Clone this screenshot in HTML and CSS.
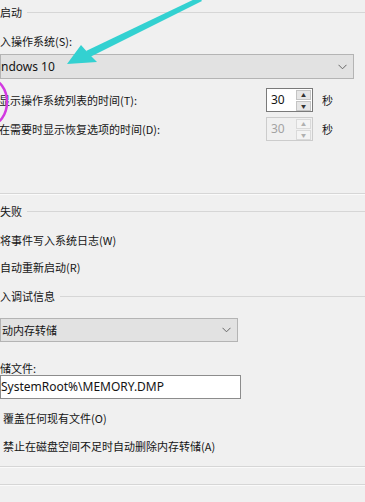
FILE: index.html
```html
<!DOCTYPE html>
<html lang="zh-CN">
<head>
  <meta charset="UTF-8">
  <meta name="viewport" content="width=device-width, initial-scale=1.0">
  <title>启动和故障恢复</title>
  <link rel="stylesheet" href="styles.css">
</head>
<body>

  <div class="panel">
    <!-- 系统启动 -->
    <div class="legend legend-first"><span>启动</span><div class="rule"></div></div>
    <div class="label label-os">入操作系统(S):</div>
    <div class="select select-os">
      <span class="select-text">ndows 10</span>
      <svg class="chevron" width="9" height="6" viewBox="0 0 9 6"><polyline points="0.5,0.8 4.5,4.8 8.5,0.8" fill="none" stroke="#666" stroke-width="1"/></svg>
    </div>

    <div class="time-row row-first">
      <span class="label cut">显示操作系统列表的时间(T):</span>
      <div class="spin">
        <span class="spin-value">30</span>
        <div class="spin-buttons">
          <span class="spin-btn">&#9650;</span>
          <span class="spin-btn">&#9660;</span>
        </div>
      </div>
      <span class="unit">秒</span>
    </div>
    <div class="time-row row-second">
      <span class="label cut">在需要时显示恢复选项的时间(D):</span>
      <div class="spin disabled">
        <span class="spin-value">30</span>
        <div class="spin-buttons">
          <span class="spin-btn">&#9650;</span>
          <span class="spin-btn">&#9660;</span>
        </div>
      </div>
      <span class="unit">秒</span>
    </div>
    <div class="group-end group-end-first"></div>

    <!-- 系统失败 -->
    <div class="legend legend-fail"><span>失败</span><div class="rule"></div></div>
    <div class="label check check-log">将事件写入系统日志(W)</div>
    <div class="label check check-restart">自动重新启动(R)</div>

    <div class="legend legend-debug"><span>入调试信息</span><div class="rule"></div></div>
    <div class="select select-dump">
      <span class="select-text cjk">动内存转储</span>
      <svg class="chevron" width="9" height="6" viewBox="0 0 9 6"><polyline points="0.5,0.8 4.5,4.8 8.5,0.8" fill="none" stroke="#666" stroke-width="1"/></svg>
    </div>
    <div class="label label-file">储文件:</div>
    <div class="textbox">SystemRoot%\MEMORY.DMP</div>
    <div class="label check check-overwrite">覆盖任何现有文件(O)</div>
    <div class="label check check-keep">禁止在磁盘空间不足时自动删除内存转储(A)</div>
    <div class="group-end group-end-second"></div>
    <div class="group-end group-end-third"></div>

    <!-- 标注 -->
    <svg class="marks" width="365" height="502" viewBox="0 0 365 502">
      <polygon points="199,-3 202,1 90,57 86,51" fill="#33d1d1"/>
      <polygon points="67,64 81,45 89,54 97,62" fill="#33d1d1"/>
      <ellipse cx="-10" cy="102" rx="17" ry="23" fill="none" stroke="#d23ae0" stroke-width="2.5"/>
    </svg>
  </div>

</body>
</html>
```

FILE: styles.css
```css
/* Geral */
body {
  margin: 0;
  background: #f0f0f0;
  font-family: "Noto Sans CJK SC", "Noto Sans", sans-serif;
  font-size: 11px;
  color: #141414;
}
.panel {
  position: relative;
  width: 365px;
  height: 502px;
  overflow: hidden;
  display: flex;
  flex-direction: column;
}
.label {
  height: 16px;
  line-height: 16px;
  white-space: nowrap;
}
.cut {
  margin-left: -1px;
}
/* Títulos de grupo */
.legend {
  display: flex;
  align-items: center;
  height: 16px;
  line-height: 16px;
}
.legend .rule {
  flex: 1;
  height: 1px;
  background: #d6d6d6;
  margin-left: 5px;
}
.legend-first { margin-top: 4px; }
.legend-fail { margin-top: 8px; }
.legend-debug { margin-top: 13px; }
.group-end {
  height: 1px;
  background: #d6d6d6;
  border-bottom: 1px solid #fafafa;
}
.group-end-first { margin-top: 52px; }
.group-end-second { margin-top: 12px; }
.group-end-third { margin-top: 16px; }
/* Caixas de seleção */
.select {
  display: flex;
  align-items: center;
  justify-content: space-between;
  box-sizing: border-box;
  background: #e2e2e2;
  border: 1px solid #b4b4b4;
  padding: 0 6px 0 0;
  font-family: "Noto Sans", "Noto Sans CJK SC", sans-serif;
  font-size: 12px;
}
.select .cjk {
  font-family: "Noto Sans CJK SC", sans-serif;
  font-size: 11px;
  margin-left: 1px;
}
.select-os {
  margin-top: 5px;
  width: 354px;
  height: 25px;
}
.select-dump {
  margin-top: 14px;
  width: 238px;
  height: 24px;
}
.label-os { margin-top: 13px; }
.label-file {
  margin-top: 19px;
  height: 14px;
  line-height: 14px;
}
/* Linhas de tempo */
.time-row {
  display: grid;
  grid-template-columns: 257px 47px auto;
  column-gap: 9px;
  align-items: center;
  height: 24px;
}
.row-first { margin-top: 9px; }
.row-second { margin-top: 5px; }
.spin {
  display: flex;
  box-sizing: border-box;
  height: 24px;
  border: 1px solid #7a7a7a;
  background: #fff;
}
.spin-value {
  flex: 1;
  padding-left: 4px;
  line-height: 21px;
  font-family: "Noto Sans", sans-serif;
  font-size: 12px;
}
.spin-buttons {
  width: 15px;
  display: flex;
  flex-direction: column;
  gap: 1px;
  padding: 1px 1px 1px 0;
  background: #fff;
}
.spin-btn {
  flex: 1;
  background: #e6e6e6;
  border: 1px solid #c4c4c4;
  font-size: 5px;
  line-height: 8px;
  text-align: center;
  color: #333;
}
.spin.disabled {
  border-color: #cccccc;
  background: #f0f0f0;
}
.spin.disabled .spin-value { color: #a3a3a3; }
.spin.disabled .spin-buttons { background: #f0f0f0; }
.spin.disabled .spin-btn {
  background: #f4f4f4;
  border-color: #dadada;
  color: #b0b0b0;
}
.unit { font-size: 11px; }
/* Opções */
.check-log { margin-top: 13px; }
.check-restart { margin-top: 11px; }
.check-overwrite { margin-top: 11px; padding-left: 3px; }
.check-keep { margin-top: 12px; padding-left: 3px; }
.textbox {
  box-sizing: border-box;
  width: 241px;
  height: 24px;
  line-height: 22px;
  background: #fff;
  border: 1px solid #8c8c8c;
  font-family: "Noto Sans", sans-serif;
  font-size: 12px;
  white-space: nowrap;
}
/* Anotações */
.marks {
  position: absolute;
  left: 0;
  top: 0;
  pointer-events: none;
}
```
